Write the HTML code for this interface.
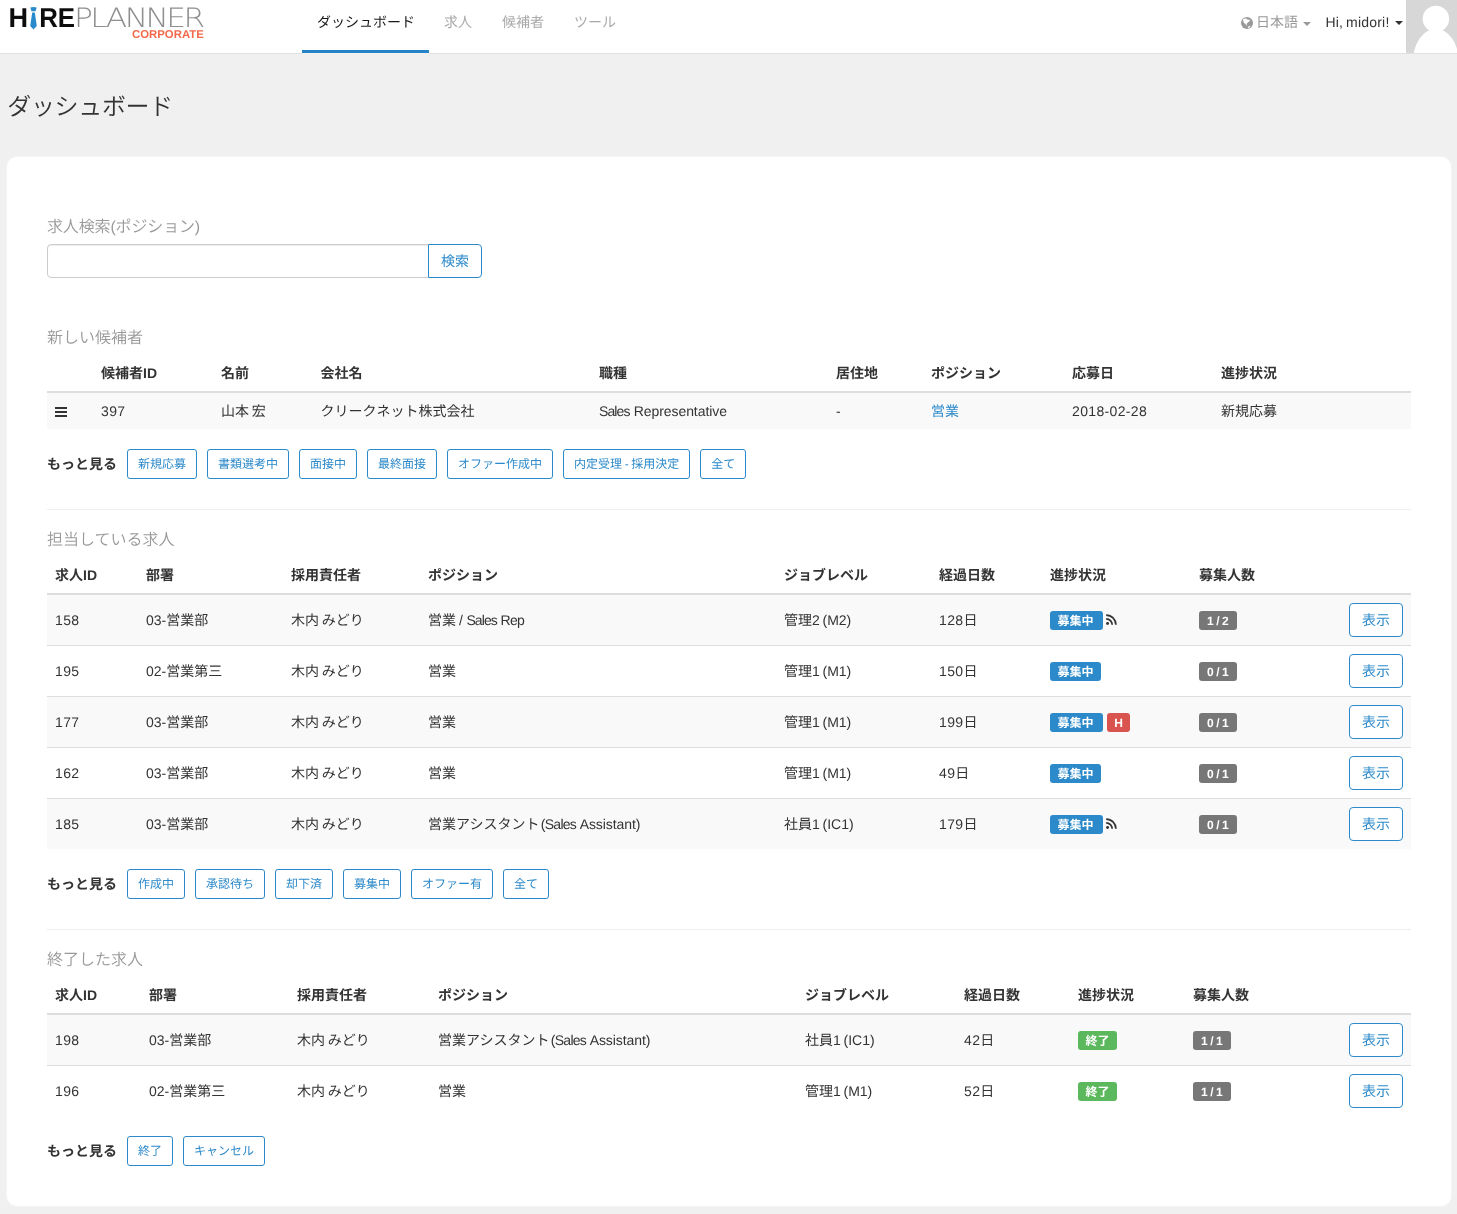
<!DOCTYPE html>
<html lang="ja">
<head>
<meta charset="utf-8">
<title>ダッシュボード</title>
<style>
*{box-sizing:border-box}
html,body{margin:0;padding:0}
body{text-rendering:geometricPrecision;will-change:transform;width:1457px;height:1214px;overflow:hidden;background:#f0f0f0;font-family:"Liberation Sans","Noto Sans CJK JP",sans-serif;font-size:14px;line-height:20px;color:#333;position:relative;word-spacing:-1.2px}
a{color:#2d8aca;text-decoration:none}
/* navbar */
.nav{position:absolute;left:0;top:0;width:1457px;height:54px;background:#fff;border-bottom:1px solid #e1e1e1}
.logo{position:absolute;left:0;top:0;width:220px;height:53px}
.menu{position:absolute;left:302px;top:0;height:53px;display:flex}
.menu a{display:block;height:53px;padding:12px 15px 0 15px;line-height:20px;color:#aaa;font-size:14px;white-space:nowrap}
.menu a.act{color:#1a1a1a;border-bottom:3px solid #2584c7;width:127px;box-shadow:0 1px 0 #f4f1ee}
.right{position:absolute;top:0;right:0;height:53px}
.lang{position:absolute;left:1241px;top:12px;line-height:20px;color:#999;white-space:nowrap}
.user{position:absolute;left:1325.5px;top:12px;line-height:20px;color:#333;white-space:nowrap;letter-spacing:.2px}
.globe{vertical-align:middle;margin:0 3px 0 0}
.avatar svg{display:block}
.caret{position:absolute;top:22px;width:0;height:0;border-left:4px solid transparent;border-right:4px solid transparent;border-top:4px solid currentColor;vertical-align:middle}
.avatar{position:absolute;left:1406px;top:0;width:51px;height:53px;background:#d7d7d7;overflow:hidden}
h1{position:absolute;left:7.3px;top:91px;margin:0;font-size:24px;line-height:34px;font-weight:350;letter-spacing:-.35px;color:#333;white-space:nowrap}
.panel{position:absolute;left:7px;top:157px;width:1444px;height:1049px;background:#fff;border-radius:10px;box-shadow:0 0 0 1px rgba(255,255,255,.3)}
.in{position:absolute;left:40px;top:0;width:1364px}
h4{margin:0;font-size:16px;line-height:18px;font-weight:350;color:#999;white-space:nowrap;position:absolute;left:0}
.search{position:absolute;left:0;top:87px;height:34px;width:435px}
.search .inp{position:absolute;left:0;top:0;width:382px;height:34px;border:1px solid #ccc;border-radius:4px 0 0 4px;background:#fff;box-shadow:inset 0 1px 1px rgba(0,0,0,.075)}
.search .btn{position:absolute;left:381px;top:0;width:54px;height:34px;border-radius:0 4px 4px 0}
.btn{display:inline-block;border:1px solid #2d8aca;color:#2d8aca;background:#fff;border-radius:4px;text-align:center;font-size:14px;line-height:32px;height:34px;width:54px;white-space:nowrap}
table{border-collapse:separate;border-spacing:0;position:absolute;left:0;width:1364px;table-layout:fixed}
th{font-weight:bold;text-align:left;padding:0 8px;height:38px;line-height:20px;border-bottom:2px solid #ddd;white-space:nowrap;vertical-align:middle}
td{padding:0 8px;line-height:20px;border-top:1px solid #ddd;white-space:nowrap;vertical-align:middle;overflow:visible}
tbody tr:nth-child(odd) td{background:#f9f9f9}
tbody tr:first-child td{border-top:0}
.t1 td{height:36px}
.t2 td{height:51px}
.t2 tbody tr:first-child td{height:50px}
.bars{display:inline-block;width:12px;vertical-align:middle}
.bars i{display:block;height:2px;background:#333;margin:0 0 2px 0}
.bars i:last-child{margin:0}
.rss{vertical-align:middle;margin-left:2.5px;position:relative;top:-1px}
.lb.d{margin-left:4px}
.more{position:absolute;left:0;height:30px;white-space:nowrap;display:flex;align-items:center}
.more b{display:inline-block;width:70px;margin-right:10px;font-weight:bold}
.sm{display:inline-block;height:30px;line-height:28px;padding:0 10px;font-size:12px;border:1px solid #2d8aca;border-radius:3px;color:#2d8aca;margin-right:10px;background:#fff}
hr{position:absolute;left:0;width:1364px;height:1px;border:0;background:#eee;margin:0}
.lb{display:inline-block;height:19px;line-height:19px;padding:1px 7.5px 0;font-size:12px;font-weight:bold;color:#fff;border-radius:3px;vertical-align:middle;white-space:pre}
.lb.p{background:#2d8aca}
.lb.d{background:#d9534f}
.lb.s{background:#5cb85c}
.lb.g{background:#777;letter-spacing:2.5px;padding:1px 0 0 8px;width:38px}
.lb.w{padding-right:9.5px}
.lb.d{padding-left:7.2px;padding-right:7.2px}
.l{letter-spacing:-.25px}
.n{letter-spacing:.34px}
</style>
</head>
<body>
<div class="nav">
  <div class="logo"><svg width="220" height="53" viewBox="0 0 220 53" role="img" aria-label="HIREPLANNER CORPORATE">
<text x="8.4" y="27" font-family="Liberation Sans, sans-serif" font-weight="bold" font-size="27.2" fill="#0d0d0d" textLength="19.6" lengthAdjust="spacingAndGlyphs">H</text>
<path d="M30.3 7.6 Q33.5 6.6 36.7 7.6 L35.5 11.3 L31.5 11.3 Z M32.2 12.4 L34.8 12.4 L36.8 26 L33.5 29.4 L30.2 26 Z" fill="#2a8acb"/>
<text x="39.2" y="27" font-family="Liberation Sans, sans-serif" font-weight="bold" font-size="27.2" fill="#0d0d0d" textLength="35.9" lengthAdjust="spacingAndGlyphs">RE</text>
<text x="74" y="26.5" font-family="DejaVu Sans Light, DejaVu Sans, sans-serif" font-weight="200" font-size="26.6" fill="#8f8f8f" letter-spacing="-2.2" textLength="128.6" lengthAdjust="spacingAndGlyphs">PLANNER</text>
<text x="132" y="38.1" font-family="Liberation Sans, sans-serif" font-weight="bold" font-size="11.4" fill="#f4694a" textLength="71.8" lengthAdjust="spacingAndGlyphs">CORPORATE</text>
</svg></div>
  <div class="menu"><a class="act"><span>ダッシュボード</span></a><a><span>求人</span></a><a><span>候補者</span></a><a><span>ツール</span></a></div>
  <div class="lang"><svg class="globe" width="12" height="12" viewBox="0 0 12 12"><circle cx="6" cy="6" r="6" fill="#999"/><path d="M2.1 2.3 L4.1 1.4 L5.7 1.4 L5.9 2.5 L7 2.6 L9.3 3.3 L7.2 5.3 L5.9 6.6 L5.6 7.8 L6.5 9.1 L5.6 8.6 L4.4 6.9 L2.7 5.4 L2.1 3.6 Z" fill="#fff"/><ellipse cx="8.1" cy="9.9" rx="1.4" ry="0.75" transform="rotate(-30 8.1 9.9)" fill="#fff"/></svg>日本語</div><span class="caret" style="left:1303px;color:#999"></span>
  <div class="user">Hi, midori!</div><span class="caret" style="left:1395px;top:21px;color:#333"></span>
  <div class="avatar"><svg width="51" height="53" viewBox="0 0 51 53"><circle cx="29.9" cy="18.9" r="13.2" fill="#fff"/><ellipse cx="29.9" cy="62" rx="23" ry="33.2" fill="#fff"/></svg></div>
</div>
<h1>ダッシュボード</h1>
<div class="panel"><div class="in">
  <h4 style="top:62px;letter-spacing:-.15px">求人検索(ポジション)</h4>
  <div class="search"><div class="inp"></div><a class="btn">検索</a></div>

  <h4 style="top:173px">新しい候補者</h4>
  <table class="t1" style="top:198px"><colgroup><col style="width:46px"><col style="width:120px"><col style="width:99.5px"><col style="width:278.5px"><col style="width:237px"><col style="width:95px"><col style="width:141px"><col style="width:149px"><col style="width:198px"></colgroup>
    <thead><tr><th></th><th>候補者ID</th><th>名前</th><th>会社名</th><th>職種</th><th>居住地</th><th>ポジション</th><th>応募日</th><th>進捗状況</th></tr></thead>
    <tbody><tr><td><span class="bars"><i></i><i></i><i></i></span></td><td><span class="n">397</span></td><td>山本 宏</td><td>クリークネット株式会社</td><td><span style="letter-spacing:-0.9px">Sales</span><span style="word-spacing:0.21px"> </span><span style="letter-spacing:-0.06px">Representative</span></td><td>-</td><td><a>営業</a></td><td><span class="n">2018-02-28</span></td><td>新規応募</td></tr></tbody>
  </table>
  <div class="more" style="top:292px"><b>もっと見る</b><a class="sm">新規応募</a><a class="sm">書類選考中</a><a class="sm">面接中</a><a class="sm">最終面接</a><a class="sm">オファー作成中</a><a class="sm" style="word-spacing:-.7px">内定受理 - 採用決定</a><a class="sm">全て</a></div>
  <hr style="top:352px">

  <h4 style="top:375px">担当している求人</h4>
  <table class="t2" style="top:400px"><colgroup><col style="width:91px"><col style="width:145px"><col style="width:137px"><col style="width:356px"><col style="width:155px"><col style="width:111px"><col style="width:149px"><col style="width:150px"><col style="width:70px"></colgroup>
    <thead><tr><th>求人ID</th><th>部署</th><th>採用責任者</th><th>ポジション</th><th>ジョブレベル</th><th>経過日数</th><th>進捗状況</th><th>募集人数</th><th></th></tr></thead>
    <tbody>
    <tr><td><span class="n">158</span></td><td>03-営業部</td><td>木内 みどり</td><td>営業<span style="letter-spacing:.37px"> / </span><span style="letter-spacing:-0.9px">Sales</span><span style="word-spacing:-0.4px"> </span><span style="letter-spacing:-0.65px">Rep</span></td><td>管理2 (M2)</td><td><span class="n">128</span>日</td><td><span class="lb p w">募集中</span><svg class="rss" width="11" height="11" viewBox="0 0 12 12"><circle cx="1.7" cy="10.3" r="1.6" fill="#333"/><path d="M0.2 5.2 A6.6 6.6 0 0 1 6.8 11.8" fill="none" stroke="#333" stroke-width="1.9"/><path d="M0.2 1.2 A10.6 10.6 0 0 1 10.8 11.8" fill="none" stroke="#333" stroke-width="1.9"/></svg></td><td><span class="lb g">1/2</span></td><td><a class="btn">表示</a></td></tr>
<tr><td><span class="n">195</span></td><td>02-営業第三</td><td>木内 みどり</td><td>営業</td><td>管理1 (M1)</td><td><span class="n">150</span>日</td><td><span class="lb p">募集中</span></td><td><span class="lb g">0/1</span></td><td><a class="btn">表示</a></td></tr>
<tr><td><span class="n">177</span></td><td>03-営業部</td><td>木内 みどり</td><td>営業</td><td>管理1 (M1)</td><td><span class="n">199</span>日</td><td><span class="lb p w">募集中</span><span class="lb d">H</span></td><td><span class="lb g">0/1</span></td><td><a class="btn">表示</a></td></tr>
<tr><td><span class="n">162</span></td><td>03-営業部</td><td>木内 みどり</td><td>営業</td><td>管理1 (M1)</td><td><span class="n">49</span>日</td><td><span class="lb p">募集中</span></td><td><span class="lb g">0/1</span></td><td><a class="btn">表示</a></td></tr>
<tr><td><span class="n">185</span></td><td>03-営業部</td><td>木内 みどり</td><td>営業アシスタント<span style="word-spacing:-2.6px"> </span><span style="letter-spacing:-0.72px">(Sales</span><span style="word-spacing:-0.4px"> </span><span style="letter-spacing:-0.08px">Assistant)</span></td><td>社員1 (IC1)</td><td><span class="n">179</span>日</td><td><span class="lb p w">募集中</span><svg class="rss" width="11" height="11" viewBox="0 0 12 12"><circle cx="1.7" cy="10.3" r="1.6" fill="#333"/><path d="M0.2 5.2 A6.6 6.6 0 0 1 6.8 11.8" fill="none" stroke="#333" stroke-width="1.9"/><path d="M0.2 1.2 A10.6 10.6 0 0 1 10.8 11.8" fill="none" stroke="#333" stroke-width="1.9"/></svg></td><td><span class="lb g">0/1</span></td><td><a class="btn">表示</a></td></tr>
    </tbody>
  </table>
  <div class="more" style="top:712px"><b>もっと見る</b><a class="sm">作成中</a><a class="sm">承認待ち</a><a class="sm">却下済</a><a class="sm">募集中</a><a class="sm">オファー有</a><a class="sm">全て</a></div>
  <hr style="top:772px">

  <h4 style="top:795px">終了した求人</h4>
  <table class="t2" style="top:820px"><colgroup><col style="width:94px"><col style="width:148px"><col style="width:141px"><col style="width:367px"><col style="width:159px"><col style="width:114px"><col style="width:115px"><col style="width:156px"><col style="width:70px"></colgroup>
    <thead><tr><th>求人ID</th><th>部署</th><th>採用責任者</th><th>ポジション</th><th>ジョブレベル</th><th>経過日数</th><th>進捗状況</th><th>募集人数</th><th></th></tr></thead>
    <tbody>
    <tr><td><span class="n">198</span></td><td>03-営業部</td><td>木内 みどり</td><td>営業アシスタント<span style="word-spacing:-2.6px"> </span><span style="letter-spacing:-0.72px">(Sales</span><span style="word-spacing:-0.4px"> </span><span style="letter-spacing:-0.08px">Assistant)</span></td><td>社員1 (IC1)</td><td><span class="n">42</span>日</td><td><span class="lb s">終了</span></td><td><span class="lb g">1/1</span></td><td><a class="btn">表示</a></td></tr>
<tr><td><span class="n">196</span></td><td>02-営業第三</td><td>木内 みどり</td><td>営業</td><td>管理1 (M1)</td><td><span class="n">52</span>日</td><td><span class="lb s">終了</span></td><td><span class="lb g">1/1</span></td><td><a class="btn">表示</a></td></tr>
    </tbody>
  </table>
  <div class="more" style="top:979px"><b>もっと見る</b><a class="sm">終了</a><a class="sm">キャンセル</a></div>
</div></div>
</body>
</html>
